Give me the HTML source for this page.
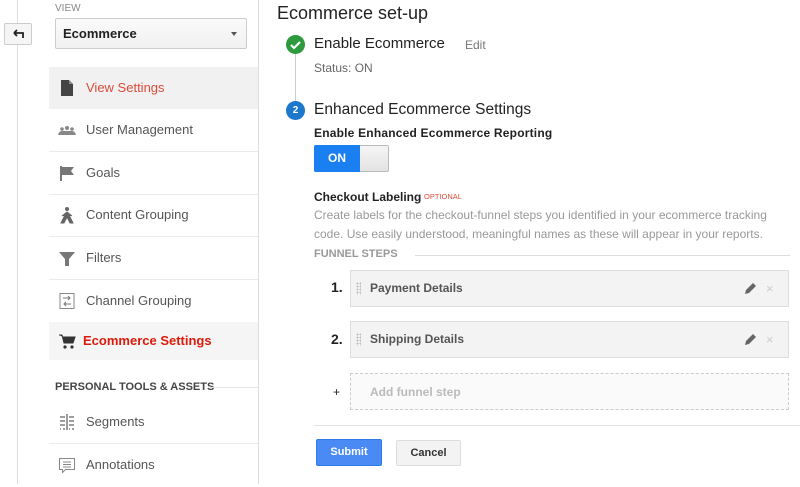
<!DOCTYPE html>
<html><head><style>
*{box-sizing:border-box;margin:0;padding:0}
body{width:800px;height:484px;overflow:hidden;background:#fff;font-family:"Liberation Sans",Arial,sans-serif;position:relative}
.a{position:absolute}
.row{position:absolute;left:49px;width:209px;height:43px;border-bottom:1px solid #ebebeb;font-size:13px;color:#555;line-height:42px;padding-left:37px}
.ic{position:absolute;left:9px;top:12px;width:18px;height:18px}
.box{position:absolute;left:350px;width:439px;height:37px;background:#f3f3f3;border:1px solid #ddd;font-size:12px;font-weight:bold;color:#555;line-height:35px;padding-left:19px}
.num{position:absolute;left:331px;font-size:14px;font-weight:bold;color:#222}
.grip{position:absolute;left:5px;top:11px;width:5px;height:13px;background-image:radial-gradient(#bbb 0.8px,transparent 1px);background-size:3px 3px}
</style></head><body>
<div class="a" style="left:17px;top:0;width:1px;height:484px;background:#ddd"></div>
<div class="a" style="left:4px;top:23px;width:28px;height:22px;border:1px solid #ccc;border-radius:2px;background:#f5f5f5"><svg class="a" style="left:8px;top:5px" width="12" height="10"><path d="M1 4h9v5M1 4l3-3M1 4l3 3" stroke="#222" stroke-width="1.8" fill="none"/></svg></div>
<div class="a" style="left:258px;top:0;width:1px;height:484px;background:#ddd"></div>
<div class="a" style="left:55px;top:3px;font-size:10px;color:#888">VIEW</div>
<div class="a" style="left:55px;top:18px;width:192px;height:31px;border:1px solid #ccc;border-radius:2px;background:linear-gradient(#fafafa,#f1f1f1);font-size:13px;font-weight:bold;color:#222;line-height:29px;padding-left:7px">Ecommerce<span style="position:absolute;right:9px;top:13px;border:3.5px solid transparent;border-top:4px solid #555"></span></div>
<div class="row" style="top:67px;background:#f1f1f1;color:#dd4b39;border:none;height:42px">View Settings<svg class="ic" viewBox="0 0 18 18"><path d="M3 1h8l4 4v12H3z" fill="#444"/><path d="M11 1v4h4" fill="#888"/></svg></div>
<div class="row" style="top:109px">User Management<svg class="ic" viewBox="0 0 18 18"><circle cx="4" cy="8" r="1.8" fill="#888"/><circle cx="9" cy="7" r="2" fill="#888"/><circle cx="14" cy="8" r="1.8" fill="#888"/><path d="M0 14q1-4 4-4t5 0 5 0 4 4z" fill="#888"/></svg></div>
<div class="row" style="top:152px">Goals<svg class="ic" viewBox="0 0 18 18"><path d="M2 2h2v15H2zM4 3h12l-3 4 3 4H4z" fill="#777"/></svg></div>
<div class="row" style="top:194px">Content Grouping<svg class="ic" viewBox="0 0 18 18"><circle cx="9" cy="3" r="2" fill="#666"/><path d="M3 17l5-10h2l5 10h-3l-3-6-3 6z M4 10l5-4 5 4" fill="#666" stroke="#666"/></svg></div>
<div class="row" style="top:237px">Filters<svg class="ic" viewBox="0 0 18 18"><path d="M1 3h16l-6 7v7h-4v-7z" fill="#777"/></svg></div>
<div class="row" style="top:280px;height:42px;border:none">Channel Grouping<svg class="ic" viewBox="0 0 18 18"><rect x="2" y="1.5" width="14" height="15" fill="none" stroke="#888"/><path d="M5 6h7M10 4l2 2-2 2M13 12H6M8 10l-2 2 2 2" stroke="#777" fill="none"/></svg></div>
<div class="row" style="top:322px;height:38px;line-height:38px;background:#f5f5f5;border:none;color:#dd1b0b;font-weight:bold;padding-left:34px">Ecommerce Settings<svg class="ic" style="top:10px" viewBox="0 0 18 18"><path d="M1 3h3l2 8h9l2-6H5" fill="#333" stroke="#333"/><circle cx="7" cy="15" r="1.6" fill="#333"/><circle cx="14" cy="15" r="1.6" fill="#333"/></svg></div>
<div class="a" style="left:55px;top:381px;font-size:11px;font-weight:bold;color:#444">PERSONAL TOOLS &amp; ASSETS</div>
<div class="a" style="left:210px;top:387px;width:48px;height:1px;background:#e5e5e5"></div>
<div class="row" style="top:401px">Segments<svg class="ic" viewBox="0 0 18 18"><path d="M9 1v16M2 4h5M2 8h5M2 12h5M11 4h5M11 8h5M11 12h5M2 16h1M5 16h2M11 16h1M14 16h2" stroke="#666" stroke-width="1.3"/></svg></div>
<div class="row" style="top:444px;border:none">Annotations<svg class="ic" viewBox="0 0 18 18"><path d="M1.5 2.5h15v11h-9l-3 3v-3h-3z" fill="none" stroke="#888"/><path d="M5 6h8M5 8.5h8M5 11h8" stroke="#888"/></svg></div>

<div class="a" style="left:277px;top:3px;font-size:18px;color:#222">Ecommerce set-up</div>
<div class="a" style="left:295px;top:53px;width:1px;height:48px;background:#ccc"></div>
<svg class="a" style="left:286px;top:35px" width="19" height="19"><circle cx="9.5" cy="9.5" r="9.5" fill="#2c9a3d"/><path d="M5 10l3 3 6-6" stroke="#fff" stroke-width="2.2" fill="none"/></svg>
<div class="a" style="left:314px;top:35px;font-size:15px;color:#222">Enable Ecommerce</div>
<div class="a" style="left:465px;top:38px;font-size:12px;color:#777">Edit</div>
<div class="a" style="left:314px;top:61px;font-size:12px;color:#666">Status: ON</div>
<div class="a" style="left:286px;top:101px;width:19px;height:19px;border-radius:50%;background:#1b78cc;color:#fff;font-size:10px;font-weight:bold;text-align:center;line-height:19px">2</div>
<div class="a" style="left:314px;top:101px;font-size:15.5px;color:#222">Enhanced Ecommerce Settings</div>
<div class="a" style="left:314px;top:126px;font-size:12px;font-weight:bold;color:#222;letter-spacing:0.2px">Enable Enhanced Ecommerce Reporting</div>
<div class="a" style="left:314px;top:145px;width:75px;height:27px;border:1px solid #bbb;border-radius:2px;background:linear-gradient(#f5f5f5,#e3e3e3)"></div>
<div class="a" style="left:314px;top:145px;width:46px;height:27px;border-radius:2px 0 0 2px;background:#1a7ff0;color:#fff;font-size:12px;font-weight:bold;text-align:center;line-height:27px">ON</div>
<div class="a" style="left:314px;top:190px;font-size:12px;font-weight:bold;color:#222">Checkout Labeling</div>
<div class="a" style="left:424px;top:192px;font-size:7.5px;color:#dd4b39">OPTIONAL</div>
<div class="a" style="left:314px;top:206px;font-size:12px;line-height:18.5px;color:#999;width:480px">Create labels for the checkout-funnel steps you identified in your ecommerce tracking code. Use easily understood, meaningful names as these will appear in your reports.</div>
<div class="a" style="left:314px;top:248px;font-size:11px;font-weight:bold;color:#999">FUNNEL STEPS</div>
<div class="a" style="left:415px;top:255px;width:375px;height:1px;background:#ddd"></div>
<div class="num" style="top:279px">1.</div>
<div class="box" style="top:270px"><span class="grip"></span>Payment Details<svg class="a" style="left:392px;top:11px" width="14" height="14"><path d="M2 12l1-4 7-7 3 3-7 7z" fill="#666"/></svg><span class="a" style="left:415px;top:0;color:#ccc;font-weight:normal;font-size:13px">×</span></div>
<div class="num" style="top:331px">2.</div>
<div class="box" style="top:321px"><span class="grip"></span>Shipping Details<svg class="a" style="left:392px;top:11px" width="14" height="14"><path d="M2 12l1-4 7-7 3 3-7 7z" fill="#666"/></svg><span class="a" style="left:415px;top:0;color:#ccc;font-weight:normal;font-size:13px">×</span></div>
<div class="a" style="left:333px;top:385px;font-size:12px;color:#222">+</div>
<div class="box" style="top:373px;background:#fafafa;border:1px dashed #ccc;color:#bbb;line-height:36px">Add funnel step</div>
<div class="a" style="left:314px;top:425px;width:486px;height:1px;background:#e5e5e5"></div>
<div class="a" style="left:316px;top:439px;width:66px;height:27px;background:#4a8af4;border:1px solid #3079ed;border-radius:2px;color:#fff;font-size:11px;font-weight:bold;text-align:center;line-height:25px">Submit</div>
<div class="a" style="left:396px;top:440px;width:65px;height:26px;background:#f3f3f3;border:1px solid #ddd;border-radius:2px;color:#333;font-size:11px;font-weight:bold;text-align:center;line-height:24px">Cancel</div>
</body></html>
